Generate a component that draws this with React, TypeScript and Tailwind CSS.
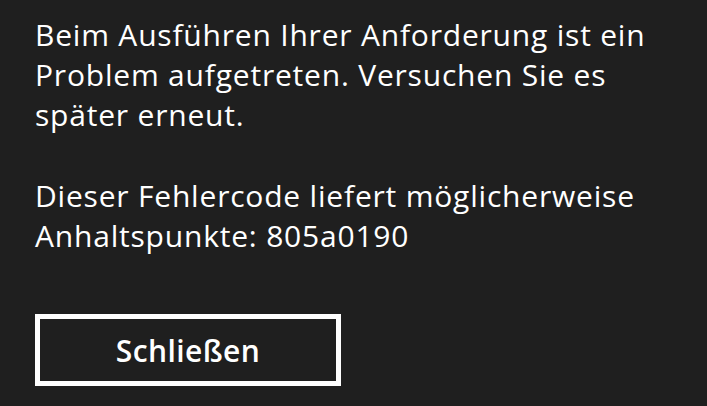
export default function App() {
  return (
    <div className="h-[406px] w-[707px] overflow-hidden bg-[#1f1f1f] pl-[35px] pt-[15px] font-['Open_Sans',sans-serif] text-white">
      <p className="text-[30px] leading-[40px] tracking-[0.8px]">
        Beim Ausführen Ihrer Anforderung ist ein
        <br />
        Problem aufgetreten. Versuchen Sie es
        <br />
        später erneut.
      </p>
      <p className="mt-[41px] text-[30px] leading-[40px] tracking-[0.8px]">
        Dieser Fehlercode liefert möglicherweise
        <br />
        Anhaltspunkte: 805a0190
      </p>
      <button className="mt-[58px] flex h-[72px] w-[306px] items-center justify-center border-[5px] border-white text-[30px] font-semibold tracking-[0.4px]">
        Schließen
      </button>
    </div>
  );
}
